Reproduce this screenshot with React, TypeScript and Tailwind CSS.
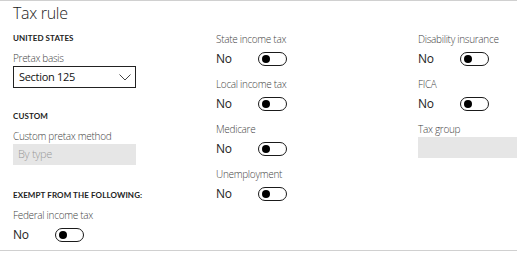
const Label = ({ text, className = "" }: { text: string; className?: string }) => (
  <span className={`block text-[10px] leading-[14px] tracking-[-0.3px] text-[#444] font-light ${className}`}>
    {text}
  </span>
);

const Toggle = () => (
  <span className="relative inline-flex h-[14px] w-[29px] items-center rounded-full border-[1.5px] border-[#1a1a1a]">
    <span className="ml-[3px] h-[8px] w-[8px] rounded-full bg-black" />
  </span>
);

const ToggleField = ({ label }: { label: string }) => (
  <div className="flex flex-col">
    <Label text={label} />
    <div className="mt-[4px] flex items-center">
      <span className="w-[42px] text-[12px] leading-[18px] tracking-[-0.2px] text-[#222]">No</span>
      <Toggle />
    </div>
  </div>
);

const SectionHeader = ({ text }: { text: string }) => (
  <div className="font-['Lato'] text-[8px] font-bold leading-[12px] tracking-[0.1px] text-[#222]">{text}</div>
);

export default function App() {
  return (
    <div
      className="h-[253px] w-[517px] overflow-hidden bg-white"
      style={{ fontFamily: '"Open Sans", "Noto Sans", sans-serif' }}
    >
      <div className="h-[251px] border-y border-[#d0d0d0] pl-[13px]">
        <h2 className="mt-[1px] text-[16px] font-light leading-[22px] tracking-[-0.3px] text-[#222]">Tax rule</h2>
        <div className="mt-[8px] grid grid-cols-[203px_202px_1fr]">
          <div className="flex flex-col">
            <SectionHeader text="UNITED STATES" />
            <Label text="Pretax basis" className="mt-[7px]" />
            <div className="mt-[1px] flex h-[22px] w-[123px] items-center justify-between border border-[#222] pl-[5px] pr-[4px]">
              <span className="text-[11px] tracking-[-0.3px] text-[#111]">Section 125</span>
              <svg width="12" height="7" viewBox="0 0 12 7" fill="none">
                <path d="M0.5 0.5 L6 6 L11.5 0.5" stroke="#444" strokeWidth="1" />
              </svg>
            </div>
            <div className="mt-[22px]">
              <SectionHeader text="CUSTOM" />
            </div>
            <Label text="Custom pretax method" className="mt-[7px]" />
            <div className="mt-[1px] flex h-[21px] w-[123px] items-center bg-[#e6e6e6] pl-[5px]">
              <span className="text-[11px] font-light tracking-[-0.3px] text-[#999]">By type</span>
            </div>
            <div className="mt-[24px]">
              <SectionHeader text="EXEMPT FROM THE FOLLOWING:" />
            </div>
            <div className="mt-[7px]">
              <ToggleField label="Federal income tax" />
            </div>
          </div>
          <div className="flex flex-col gap-[9px]">
            <ToggleField label="State income tax" />
            <ToggleField label="Local income tax" />
            <ToggleField label="Medicare" />
            <ToggleField label="Unemployment" />
          </div>
          <div className="flex flex-col gap-[9px]">
            <ToggleField label="Disability insurance" />
            <ToggleField label="FICA" />
            <div className="flex flex-col">
              <Label text="Tax group" />
              <div className="mt-[1px] h-[21px] w-full bg-[#e6e6e6]" />
            </div>
          </div>
        </div>
      </div>
    </div>
  );
}
